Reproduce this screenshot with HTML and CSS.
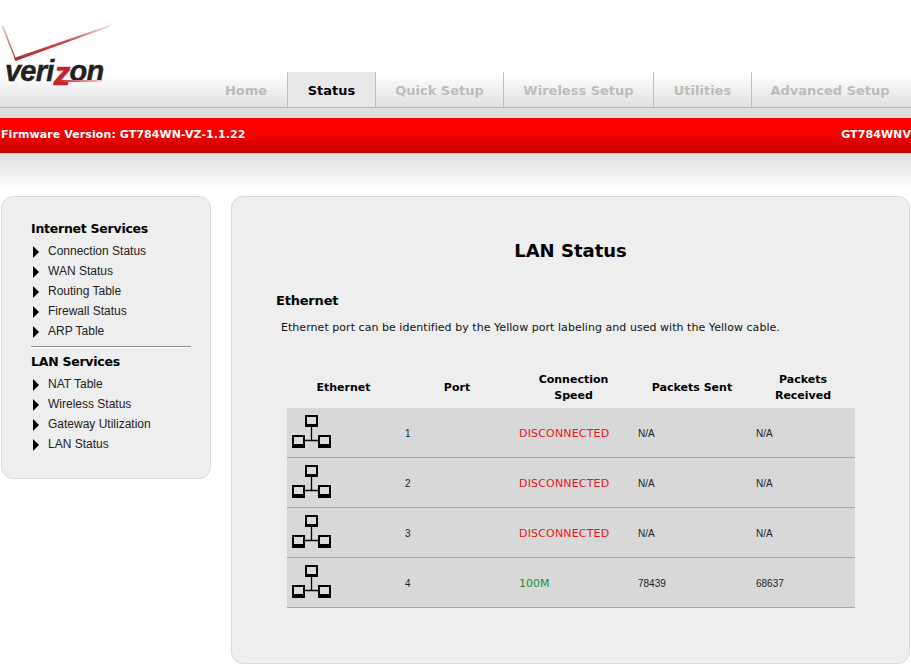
FILE: index.html
```html
<!DOCTYPE html>
<html lang="en">
<head>
<meta charset="utf-8">
<title>LAN Status</title>
<link rel="stylesheet" href="styles.css">
</head>
<body>
<svg class="defs" width="0" height="0" aria-hidden="true">
  <defs>
    <linearGradient id="checkLeft" x1="0" y1="0" x2="0" y2="1">
      <stop offset="0" stop-color="#f3d5d5"/>
      <stop offset="1" stop-color="#b4282e"/>
    </linearGradient>
    <linearGradient id="checkRight" x1="0" y1="0" x2="1" y2="0">
      <stop offset="0" stop-color="#b4282e"/>
      <stop offset="0.55" stop-color="#c9474b"/>
      <stop offset="1" stop-color="#f6dcdc"/>
    </linearGradient>
    <symbol id="net" viewBox="0 0 40 33">
      <path d="M19.500 12V25.500M13 25.500H26" stroke="#000" stroke-width="1.300" fill="none"/>
      <rect x="14" y="1" width="11" height="9" fill="#dcdcdc" stroke="#000" stroke-width="2"/>
      <rect x="13" y="9" width="13" height="3" fill="#000"/>
      <rect x="1" y="21" width="11" height="9" fill="#dcdcdc" stroke="#000" stroke-width="2"/>
      <rect x="0" y="29" width="13" height="4" fill="#000"/>
      <rect x="27" y="21" width="11" height="9" fill="#dcdcdc" stroke="#000" stroke-width="2"/>
      <rect x="26" y="29" width="13" height="4" fill="#000"/>
    </symbol>
  </defs>
</svg>
<header class="top">
  <div class="logo">
    <svg class="check" width="112" height="38" viewBox="0 0 112 38" aria-hidden="true">
      <path d="M1.500 2 L15 35.500 L16 35 L3.500 1.500Z" fill="url(#checkLeft)"/>
      <path d="M14 34 L110 1 L110.500 2.500 L15.500 37Z" fill="url(#checkRight)"/>
    </svg>
    <div class="wordmark">veri<span class="z">z</span>on</div>
  </div>
  <nav class="tabs">
    <a class="tab tab-home">Home</a>
    <a class="tab tab-status active">Status</a>
    <a class="tab tab-quick">Quick Setup</a>
    <a class="tab tab-wireless">Wireless Setup</a>
    <a class="tab tab-util">Utilities</a>
    <a class="tab tab-adv">Advanced Setup</a>
  </nav>
</header>
<div class="bar">
  <span class="fw">Firmware Version: GT784WN-VZ-1.1.22</span>
  <span class="model">GT784WNV</span>
</div>
<div class="content">
  <aside class="side">
    <h3>Internet Services</h3>
    <ul>
      <li>Connection Status</li>
      <li>WAN Status</li>
      <li>Routing Table</li>
      <li>Firewall Status</li>
      <li>ARP Table</li>
    </ul>
    <hr>
    <h3>LAN Services</h3>
    <ul>
      <li>NAT Table</li>
      <li>Wireless Status</li>
      <li>Gateway Utilization</li>
      <li>LAN Status</li>
    </ul>
  </aside>
  <main class="panel">
    <h1>LAN Status</h1>
    <h2>Ethernet</h2>
    <p>Ethernet port can be identified by the Yellow port labeling and used with the Yellow cable.</p>
    <table>
      <colgroup>
        <col class="c1"><col class="c2"><col class="c3"><col class="c4"><col class="c5">
      </colgroup>
      <thead>
        <tr><th>Ethernet</th><th>Port</th><th>Connection<br>Speed</th><th>Packets Sent</th><th>Packets<br>Received</th></tr>
      </thead>
      <tbody>
        <tr><td class="ic"><svg width="40" height="33"><use href="#net"/></svg></td><td>1</td><td class="off">DISCONNECTED</td><td>N/A</td><td>N/A</td></tr>
        <tr><td class="ic"><svg width="40" height="33"><use href="#net"/></svg></td><td>2</td><td class="off">DISCONNECTED</td><td>N/A</td><td>N/A</td></tr>
        <tr><td class="ic"><svg width="40" height="33"><use href="#net"/></svg></td><td>3</td><td class="off">DISCONNECTED</td><td>N/A</td><td>N/A</td></tr>
        <tr><td class="ic"><svg width="40" height="33"><use href="#net"/></svg></td><td>4</td><td class="on">100M</td><td>78439</td><td>68637</td></tr>
      </tbody>
    </table>
  </main>
</div>
</body>
</html>
```
FILE: styles.css
```css
* { box-sizing: border-box; }
html { background: #fff; }
html, body { margin: 0; padding: 0; height: 664px; overflow: hidden; }
body {
  font-family: "DejaVu Sans", Verdana, sans-serif;
  color: #000;
  background: linear-gradient(to bottom, #fff 0, #fff 108px, #dedede 108px, #dedede 153px, #fff 190px, #fff 100%) no-repeat;
}
.defs { display: block; height: 0; }

.top {
  height: 108px;
  display: flex;
  justify-content: space-between;
  align-items: flex-end;
  border-bottom: 1px solid #b9b9b9;
  background: linear-gradient(to bottom, #fff 0, #fff 74px, #e0e0e0 107px);
}
.logo { align-self: flex-start; padding-top: 24px; width: 112px; }
.check { display: block; }
.wordmark {
  font: italic bold 29px/24px "Liberation Sans", Arial, sans-serif;
  letter-spacing: -0.8px;
  color: #23201f;
  -webkit-text-stroke: 0.4px #23201f;
  margin: -3px 0 0 5px;
  position: relative;
  white-space: nowrap;
}
.wordmark .z {
  font-size: 34px;
  line-height: 0;
  position: relative;
  top: 4px;
  color: #c8232c;
  -webkit-text-stroke: 0.4px #c8232c;
}
.wordmark::after {
  content: "";
  position: absolute;
  left: 52px;
  top: 21px;
  width: 44px;
  height: 2px;
  background: linear-gradient(to right, #c8232c, #f3c9c9);
}

.tabs { display: flex; height: 35px; }
.tab {
  display: flex;
  align-items: center;
  justify-content: center;
  padding-top: 1px;
  font-size: 13px;
  font-weight: 700;
  color: #bcbcbc;
  border-right: 1px solid #bdbdbd;
}
.tab-home { width: 81px; padding-right: 2px; }
.tab-status { width: 88px; }
.tab-quick { width: 128px; }
.tab-wireless { width: 150px; }
.tab-util { width: 98px; }
.tab-adv { width: 159px; border-right: 0; padding-right: 3px; }
.tab.active { color: #000; background: #e8e8e8; }

.bar {
  margin-top: 10px;
  height: 35px;
  display: flex;
  align-items: center;
  justify-content: space-between;
  overflow: hidden;
  white-space: nowrap;
  padding: 0 0 3px 1px;
  font-size: 11px;
  font-weight: 700;
  letter-spacing: 0.09px;
  color: #fff;
  background: linear-gradient(to bottom, #ff0000 0, #f60000 45%, #c20000 100%);
}

.content {
  display: flex;
  align-items: flex-start;
  gap: 20px;
  padding: 0 1px;
  margin-top: 43px;
}
.side {
  width: 210px;
  height: 283px;
  flex: none;
  padding: 24px 19px 0 29px;
  background: #eeeeee;
  border: 1px solid #dadada;
  border-radius: 12px;
}
.side h3 { margin: 0; font-size: 12.5px; letter-spacing: -0.25px; line-height: 16px; font-weight: 700; }
.side ul { list-style: none; margin: 4px 0 0; padding: 0; }
.side li {
  height: 20px;
  display: flex;
  align-items: center;
  gap: 9px;
  font: 12px/20px "Liberation Sans", Arial, sans-serif;
  color: #222;
}
.side li::before {
  content: "";
  width: 0;
  height: 0;
  margin-left: 2px;
  margin-top: 1px;
  border-left: 6px solid #000;
  border-top: 6px solid transparent;
  border-bottom: 6px solid transparent;
}
.side hr {
  margin: 5px 0 6px;
  height: 2px;
  border: 0;
  border-top: 1px solid #8c8c8c;
  border-bottom: 1px solid #fafafa;
}

.panel {
  flex: none;
  width: 679px;
  height: 468px;
  padding: 43px 0 0 44px;
  background: #eeeeee;
  border: 1px solid #dadada;
  border-radius: 12px;
}
.panel h1 { margin: 0 0 0 -44px; text-align: center; font-size: 18px; line-height: 22px; font-weight: 700; }
.panel h2 { margin: 31px 0 0; font-size: 13px; letter-spacing: -0.2px; line-height: 16px; font-weight: 700; }
.panel p { margin: 12px 0 0 5px; font-size: 11px; letter-spacing: 0.045px; line-height: 14px; white-space: nowrap; color: #111; }

table {
  margin: 33px 0 0 11px;
  width: 568px;
  table-layout: fixed;
  border-collapse: separate;
  border-spacing: 0;
}
.c1 { width: 113px; } .c2 { width: 114px; } .c3 { width: 119px; } .c4 { width: 118px; } .c5 { width: 104px; }
thead tr { height: 40px; }
th { padding: 0; font-size: 11px; line-height: 16px; font-weight: 700; text-align: center; vertical-align: middle; }
tbody tr { height: 50px; }
td {
  padding: 2px 0 0 5px;
  background: #d8d8d8;
  border-bottom: 1px solid #a8a8a8;
  font: 10px "Liberation Sans", Arial, sans-serif;
  color: #222;
  vertical-align: middle;
}
td.ic { line-height: 0; padding-top: 0; padding-bottom: 2px; }
td.ic svg { display: block; }
td.off, td.on { font: 11px "DejaVu Sans", Verdana, sans-serif; }
td.off { color: #e8141c; letter-spacing: 0.17px; }
td.on { color: #1f8f1f; }
```
